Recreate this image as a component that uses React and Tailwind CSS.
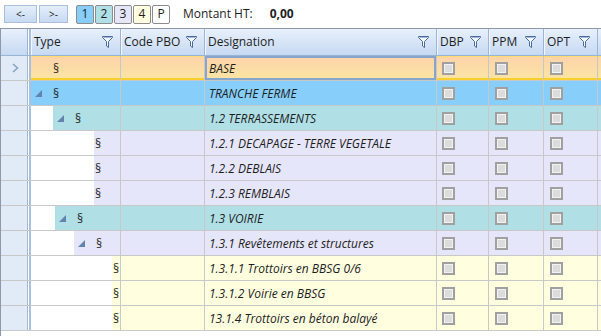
import React from 'react';

const font = { fontFamily: '"Segoe UI", "Open Sans", "Noto Sans", sans-serif' };

const rows = [
  { label: 'BASE', bg: 'bg-gradient-to-b from-[#fdd3aa] to-[#fbe5a2]', sel: true, indent: 0, exp: false, slot: true },
  { label: 'TRANCHE FERME', bg: 'bg-[#87cefa]', indent: 0, exp: true },
  { label: '1.2 TERRASSEMENTS', bg: 'bg-[#b0e0e6]', indent: 22, exp: true },
  { label: '1.2.1 DECAPAGE - TERRE VEGETALE', bg: 'bg-[#e6e6fa]', indent: 63 },
  { label: '1.2.2 DEBLAIS', bg: 'bg-[#e6e6fa]', indent: 63 },
  { label: '1.2.3 REMBLAIS', bg: 'bg-[#e6e6fa]', indent: 63 },
  { label: '1.3 VOIRIE', bg: 'bg-[#b0e0e6]', indent: 24, exp: true },
  { label: '1.3.1 Revêtements et structures', bg: 'bg-[#e6e6fa]', indent: 43, exp: true },
  { label: '1.3.1.1 Trottoirs en BBSG 0/6', bg: 'bg-[#ffffe0]', indent: 81 },
  { label: '1.3.1.2 Voirie en BBSG', bg: 'bg-[#ffffe0]', indent: 81 },
  { label: '13.1.4 Trottoirs en béton balayé', bg: 'bg-[#ffffe0]', indent: 81 },
];

const Filter = () => (
  <svg width="11" height="12" viewBox="0 0 11 12" className="shrink-0">
    <path d="M0.5 0.5 H10.5 V1.5 L6.5 5.5 V11.5 L4.5 10 V5.5 L0.5 1.5 Z" fill="#f4f8fd" stroke="#4a6a98" strokeWidth="1" />
    <path d="M1.5 1.5 H9.5" stroke="#9fb6d6" strokeWidth="1" />
  </svg>
);

const Expander = () => (
  <svg width="7" height="7" viewBox="0 0 7 7" className="shrink-0">
    <polygon points="7,0 7,7 0,7" fill="#6183ad" />
  </svg>
);

const Check = () => (
  <div className="w-[13px] h-[13px] border-2 border-[#a0a0a0] bg-[#dcdcdc] shadow-[inset_0_0_0_1px_#f2f2f2]" />
);

const Head = ({ w, label }) => (
  <div className={`${w} h-full flex items-center justify-between pl-[3px] pr-[7px] border-r border-[#9cb5d6] shadow-[inset_1px_0_0_#f3f7fd]`}>
    <span>{label}</span>
    <Filter />
  </div>
);

export default function App() {
  return (
    <div className="w-[601px] h-[336px] bg-white overflow-hidden text-[12px] text-[#1e1e1e]" style={font}>
      {/* toolbar */}
      <div className="h-[28px] flex items-center pl-[4px]">
        <button className="w-[33px] h-[18px] border border-[#a9bfdc] bg-gradient-to-b from-[#e4eefb] to-[#c7daf2] text-[10px] leading-none">&lt;-</button>
        <button className="ml-[2px] w-[29px] h-[18px] border border-[#a9bfdc] bg-gradient-to-b from-[#e4eefb] to-[#c7daf2] text-[10px] leading-none">&gt;-</button>
        <div className="ml-[8px] flex gap-[1px]">
          {[
            ['1', 'bg-[#87cefa]'],
            ['2', 'bg-[#b0e0e6]'],
            ['3', 'bg-[#e6e6fa]'],
            ['4', 'bg-[#ffffe0]'],
            ['P', 'bg-white'],
          ].map(([t, c]) => (
            <div key={t} className={`w-[18px] h-[19px] rounded-[2px] border border-[#8c8c8c] ${c} flex items-center justify-center text-[12px]`}>{t}</div>
          ))}
        </div>
        <span className="ml-[13px] text-[12px]">Montant HT:</span>
        <span className="ml-[17px] font-bold text-[12px]">0,00</span>
      </div>

      {/* grid */}
      <div className="border-l border-t border-[#8d99a8] h-[308px]">
        <div className="flex h-[27px] border-b border-[#9bb3d4] bg-gradient-to-b from-[#e8f0fc] to-[#c6d9f2]">
          <div className="w-[27px] h-full border-r border-[#9cb5d6]" />
          <div className="w-[3px] h-full border-l border-white bg-[#a9c1e0]" />
          <Head w="w-[90px]" label="Type" />
          <Head w="w-[84px]" label="Code PBO" />
          <Head w="w-[232px]" label="Designation" />
          <Head w="w-[52px]" label="DBP" />
          <Head w="w-[55px]" label="PPM" />
          <Head w="w-[54px]" label="OPT" />
          <div className="flex-1" />
        </div>

        {rows.map((r, i) => (
          <div
            key={i}
            className={`flex h-[25px] border-b border-[#c8c8c8] ${r.bg} ${r.sel ? 'shadow-[inset_0_1px_0_#ffdc6e,inset_0_-2px_0_#f8cf2e]' : ''}`}
          >
            <div className="w-[27px] h-full bg-[#e1ebf8] border-r border-[#a8b6c6] flex items-center pl-[11px]">
              {r.sel && (
                <svg width="7" height="10" viewBox="0 0 7 10">
                  <polyline points="1,1 5.5,5 1,9" fill="none" stroke="#86a3c9" strokeWidth="1.6" />
                </svg>
              )}
            </div>
            <div className="w-[3px] h-full border-l border-white bg-[#a9c1e0]" />
            <div className="w-[90px] h-full border-r border-[#c8c8c8] flex">
              {r.indent > 0 && <div className="h-full bg-white shrink-0" style={{ width: r.indent }} />}
              <div className="flex-1 h-full flex items-center pt-[1px]">
                {r.exp || r.slot ? (
                  <>
                    <div className="w-[22px] pl-[4px] flex items-center">{r.exp && <Expander />}</div>
                    <span>§</span>
                  </>
                ) : (
                  <span className="pl-[1px]">§</span>
                )}
              </div>
            </div>
            <div className="w-[84px] h-full border-r border-[#c8c8c8]" />
            <div
              className={`w-[232px] h-full border-r border-[#c8c8c8] flex items-center pl-[4px] pt-[1px] italic ${
                r.sel ? 'shadow-[inset_0_0_0_2px_#88a5cd]' : ''
              }`}
            >
              {r.label}
            </div>
            <div className="w-[52px] h-full border-r border-[#c8c8c8] flex items-center pl-[5px]"><Check /></div>
            <div className="w-[55px] h-full border-r border-[#c8c8c8] flex items-center pl-[6px]"><Check /></div>
            <div className="w-[54px] h-full border-r border-[#c8c8c8] flex items-center pl-[6px]"><Check /></div>
            <div className="flex-1" />
          </div>
        ))}
      </div>
    </div>
  );
}
